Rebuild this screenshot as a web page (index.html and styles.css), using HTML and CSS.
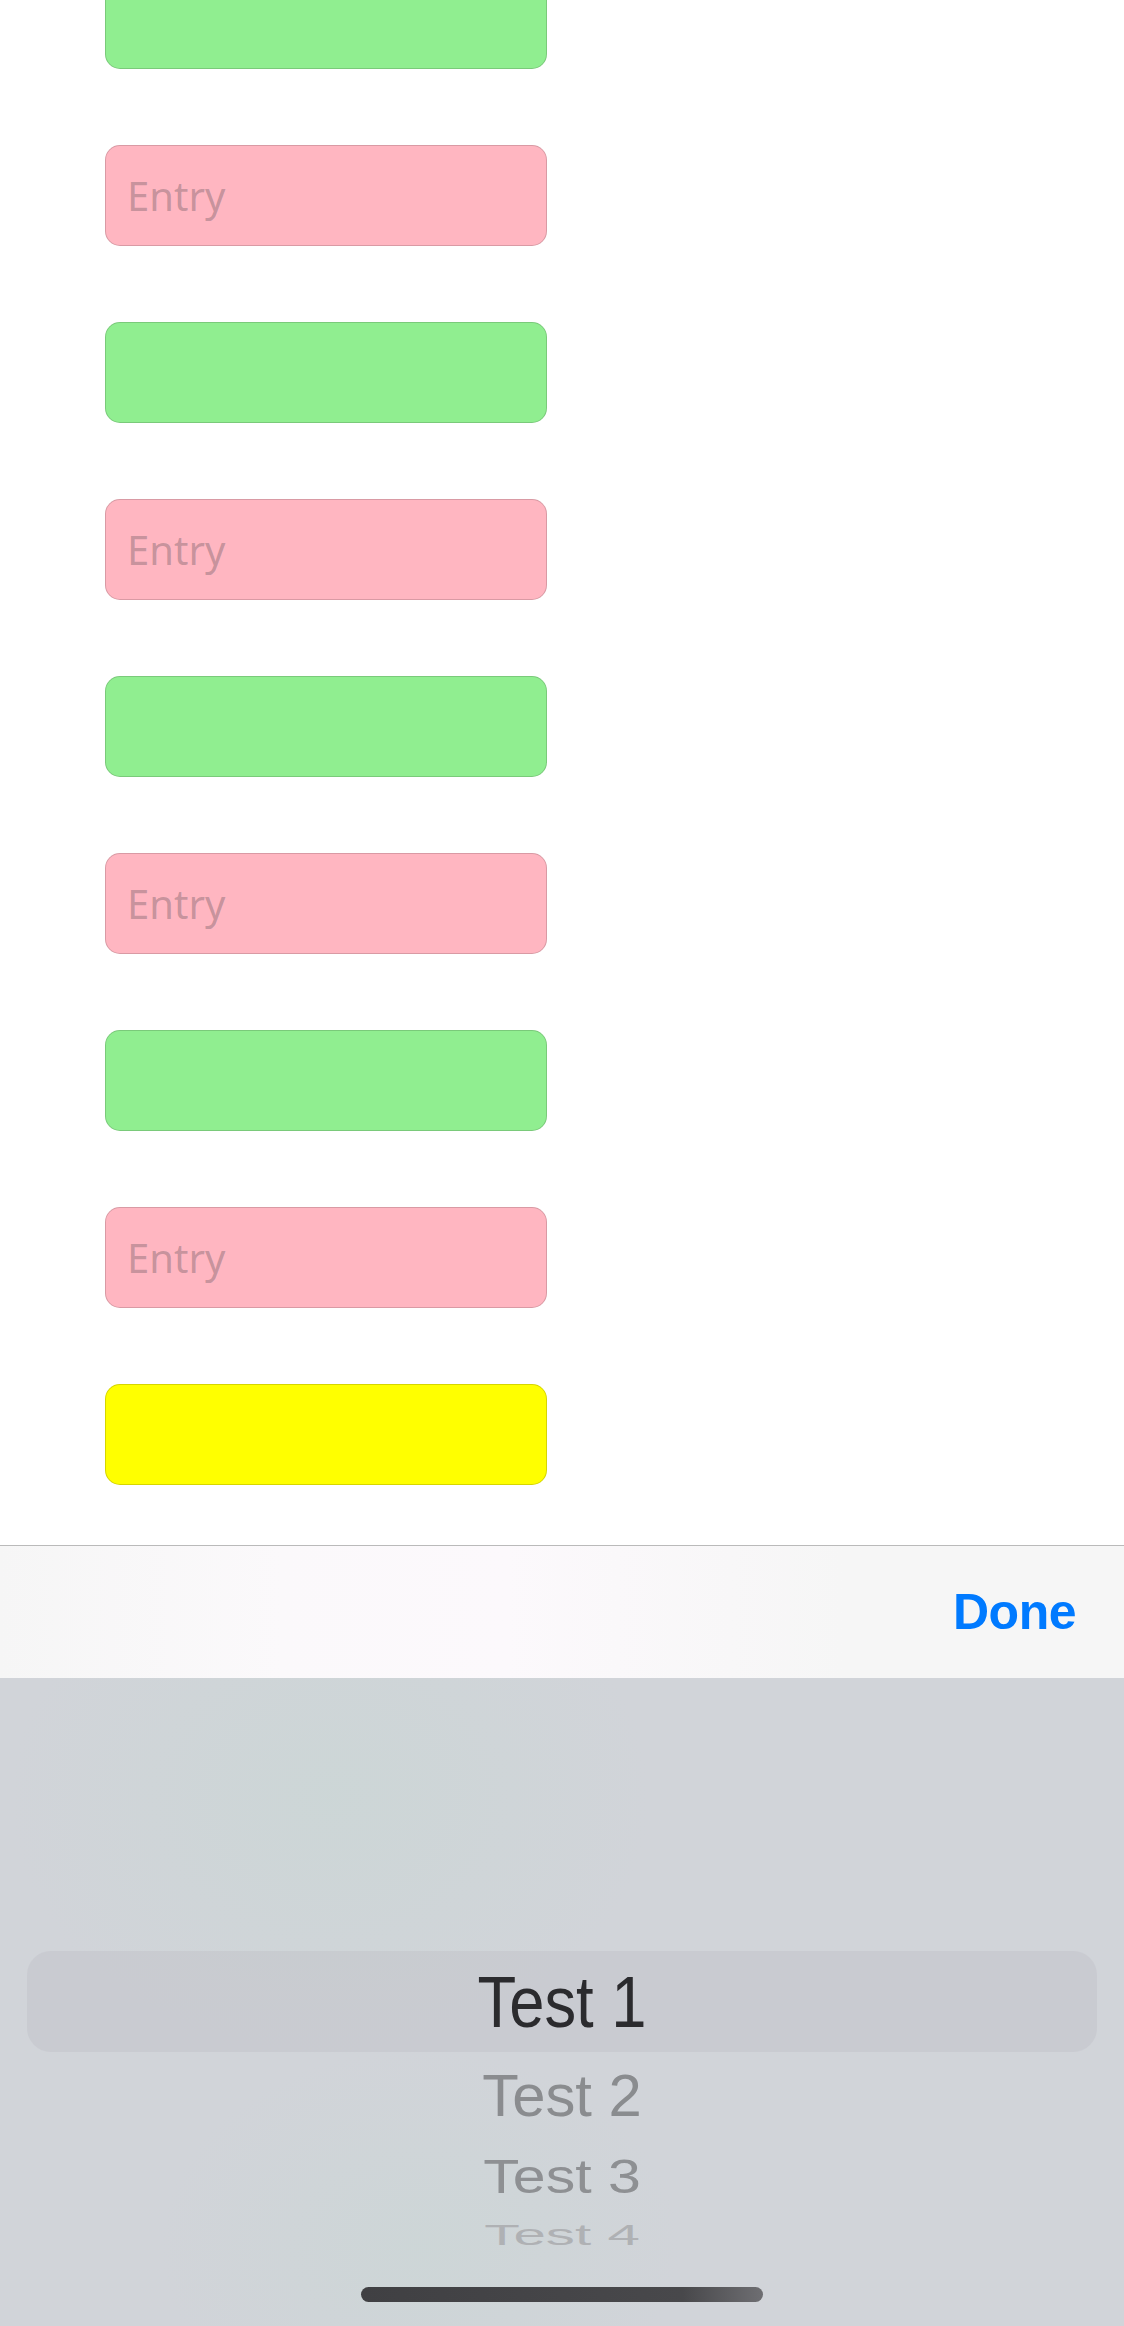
FILE: index.html
```html
<!DOCTYPE html>
<html>
<head>
<meta charset="utf-8">
<link rel="stylesheet" href="styles.css">
</head>
<body>
<div class="screen">
  <div class="content">
    <div class="list">
      <div class="field green"></div>
      <div class="field pink"><span class="ph">Entry</span></div>
      <div class="field green"></div>
      <div class="field pink"><span class="ph">Entry</span></div>
      <div class="field green"></div>
      <div class="field pink"><span class="ph">Entry</span></div>
      <div class="field green"></div>
      <div class="field pink"><span class="ph">Entry</span></div>
      <div class="field yellow"></div>
    </div>
  </div>
  <div class="toolbar">
    <span class="done">Done</span>
  </div>
  <div class="picker">
    <div class="rows">
      <div class="row row-1"><span class="label">Test 1</span></div>
      <div class="row row-2"><span class="label">Test 2</span></div>
      <div class="row row-3"><span class="label">Test 3</span></div>
      <div class="row row-4"><span class="label">Test 4</span></div>
    </div>
    <div class="home"></div>
  </div>
</div>
</body>
</html>
```

FILE: styles.css
```css
html, body {
  margin: 0;
  padding: 0;
  background: #ffffff;
}

.screen {
  width: 1124px;
  height: 2326px;
  display: flex;
  flex-direction: column;
  overflow: hidden;
  font-family: "Liberation Sans", Arial, sans-serif;
}

.content {
  height: 1545px;
  flex: none;
  overflow: hidden;
  background: #ffffff;
}

.list {
  display: flex;
  flex-direction: column;
  gap: 76px;
  margin-top: -32px;
  padding-left: 105px;
}

.field {
  box-sizing: border-box;
  width: 442px;
  height: 101px;
  border-radius: 15px;
  border: 1px solid rgba(0, 0, 0, 0.15);
  display: flex;
  align-items: center;
  padding-left: 21px;
}

.green { background: #90ee90; }
.pink { background: #ffb6c1; }
.yellow { background: #ffff00; border-color: rgba(120, 120, 0, 0.3); }

.ph {
  font-family: "Noto Sans", "Open Sans", sans-serif;
  font-size: 40px;
  line-height: 1;
  color: rgba(60, 60, 67, 0.3);
}

.toolbar {
  flex: none;
  box-sizing: border-box;
  height: 133px;
  border-top: 1px solid #bababa;
  background: linear-gradient(90deg, #f6f6f6 0%, #fbf9fb 25%, #fcf9fc 45%, #f6f6f6 75%, #f6f6f6 100%);
  display: flex;
  align-items: center;
  justify-content: flex-end;
  padding-right: 48px;
}

.done {
  font-size: 50px;
  font-weight: bold;
  color: #007aff;
  line-height: 1;
  letter-spacing: -0.5px;
}

.picker {
  flex: 1;
  display: flex;
  flex-direction: column;
  background:
    radial-gradient(ellipse 320px 260px at 330px 120px, rgba(196, 218, 210, 0.35), rgba(196, 218, 210, 0) 100%),
    radial-gradient(ellipse 260px 200px at 420px 570px, rgba(196, 218, 210, 0.3), rgba(196, 218, 210, 0) 100%),
    #d1d4d9;
}

.rows {
  display: flex;
  flex-direction: column;
  padding-top: 273px;
}

.row {
  display: flex;
  align-items: center;
  justify-content: center;
}

.label {
  font-size: 72px;
  line-height: 1;
  white-space: nowrap;
  transform-origin: center center;
}

.row-1 {
  height: 101px;
  margin: 0 27px;
  border-radius: 24px;
  background: rgba(160, 156, 168, 0.15);
}
.row-1 .label { color: #2b2b2e; transform: scale(0.88, 1); }

.row-2 { height: 88px; }
.row-2 .label { color: #8a8c8f; transform: scale(0.83, 0.814); }

.row-3 { height: 74px; }
.row-3 .label { color: #8e9093; transform: scale(0.82, 0.66); }

.row-4 { height: 41px; }
.row-4 .label { color: #afb1b4; transform: scale(0.81, 0.41); }

.home {
  align-self: center;
  margin-top: 32px;
  width: 402px;
  height: 15px;
  border-radius: 8px;
  background: linear-gradient(90deg, #404043 0%, #48484b 80%, #6e6e72 100%);
}
```
